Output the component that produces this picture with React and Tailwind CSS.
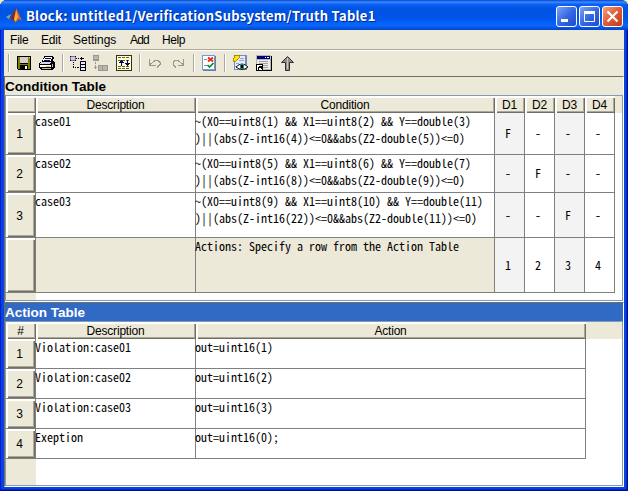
import React from "react";

const raised =
  "border-l-2 border-t-2 border-white shadow-[inset_-1px_-1px_0_#716f64,inset_-2px_-2px_0_#aca899] bg-[#ece9d8]";
const mono =
  "font-['Noto_Sans_CJK_JP',monospace] [font-feature-settings:'hwid'] text-[12px] leading-[17px] whitespace-pre";

const conditionRows = [
  { n: "1", h: "h-[42px]", d: "case01", c: "~(X0==uint8(1) && X1==uint8(2) && Y==double(3)\n)||(abs(Z-int16(4))<=0&&abs(Z2-double(5))<=0)", v: ["F", "-", "-", "-"] },
  { n: "2", h: "h-[38px]", d: "case02", c: "~(X0==uint8(5) && X1==uint8(6) && Y==double(7)\n)||(abs(Z-int16(8))<=0&&abs(Z2-double(9))<=0)", v: ["-", "F", "-", "-"] },
  { n: "3", h: "h-[45px]", d: "case03", c: "~(X0==uint8(9) && X1==uint8(10) && Y==double(11)\n)||(abs(Z-int16(22))<=0&&abs(Z2-double(11))<=0)", v: ["-", "-", "F", "-"] },
  { n: "", h: "h-[55px]", d: "", c: "Actions: Specify a row from the Action Table", v: ["1", "2", "3", "4"], footer: true },
];

const actionRows = [
  ["1", "Violation:case01", "out=uint16(1)"],
  ["2", "Violation:case02", "out=uint16(2)"],
  ["3", "Violation:case03", "out=uint16(3)"],
  ["4", "Exeption", "out=uint16(0);"],
];

function Icon({ x, w, className = "", children }) {
  return (
    <svg className={`shrink-0 ${className}`} width={w} height="20" viewBox={`${x} 54 ${w} 20`} shapeRendering="crispEdges" fill="none">
      {children}
    </svg>
  );
}

function Separator({ className = "" }) {
  return <div className={`h-[18px] w-[2px] shrink-0 border-l border-[#aca899] bg-white ${className}`} />;
}

function HeaderCell({ children }) {
  return (
    <div className={`flex h-[17px] items-center justify-center pr-[3px] text-[12px] leading-[13px] tracking-[-0.2px] ${raised}`}>
      <span>{children}</span>
    </div>
  );
}

function RowHeader({ children }) {
  return (
    <div className="border-r border-[#808080]">
      <div className={`flex h-full items-center justify-center pr-1 pb-px text-[12px] leading-[14px] ${raised}`}>{children}</div>
    </div>
  );
}

function TextCell({ footer, children }) {
  return (
    <div className={`border-r border-[#808080] ${mono} ${footer ? "bg-[#ece9d8]" : ""}`}>
      <div className="-mt-px -ml-px">{children}</div>
    </div>
  );
}

function WindowButton({ red, children }) {
  return (
    <div className={`h-[21px] w-[21px] rounded-[3px] border border-white bg-linear-to-br ${red ? "from-[#f0a080] via-[#e05a35] to-[#c23a14]" : "from-[#7ba2f4] via-[#3668e4] to-[#1c4cc8]"}`}>
      <svg width="19" height="19" viewBox="0 0 19 19">{children}</svg>
    </div>
  );
}

function Toolbar() {
  return (
    <div className="flex h-[25px] items-start pt-[3px] pl-1">
      <Separator />
      <Icon x={17} w={14} className="ml-[7px]">
        <path fill="#000" d="M17 56h14v14h-13l-1-1z" />
        <path fill="#808000" d="M18 57h2v7h8v-7h2v12h-2v-4h-8v4h-2z" />
        <path fill="#d4d0c8" d="M20 57h8v6h-8z" />
        <path fill="#fff" d="M25 66h2v3h-2z" />
        <path fill="#ece9d8" d="M29 57h1v1h-1z" />
      </Icon>
      <Icon x={39} w={17} className="ml-2">
        <path fill="#000" d="M44 56h9v1h1v2h-1v2h1v1h1v6h-1v1h-1v1H41v-1h-1v-1h-1v-5h1v-1h2v-2h1v-2h1z" />
        <path fill="#fff" d="M45 57h7v2h-1v2h-8v-2h1v-1h1z" />
        <path stroke="#000080" d="M45 58.500h6M44 60.500h6" />
        <path fill="#d8d8d8" d="M41 62h10v1h-1v1H40v-1h1z" />
        <path fill="#fff" d="M40 65h11v2H40z" />
        <path fill="#e0d800" d="M46 66h4v1h-4z" />
        <path fill="#b8b8b8" d="M42 68h9v1h-9zM52 64h1v3h-1z" />
      </Icon>
      <Separator className="ml-[6px]" />
      <Icon x={70} w={16} className="ml-[6px]">
        <path fill="#777" d="M70 56h6v5h-6z" />
        <path fill="#000080" d="M70 56h1v1h-1zM75 56h1v1h-1zM70 60h1v1h-1zM75 60h1v1h-1z" />
        <path fill="#c8c8f0" d="M71 57h4v3h-4z" />
        <path fill="#000" d="M76 58h1v1h-1zM78 58h1v1h-1zM80 58h4v1h-4zM81 57h1v3h-1zM80 61h6v10h-6zM73 62h1v1h-1zM73 64h1v1h-1zM73 66h1v2h-1zM75 67h1v1h-1zM77 67h2v1h-2z" />
        <path fill="#e8e8ff" d="M81 62h4v2h-4zM81 65h4v2h-4zM81 68h4v2h-4z" />
        <path fill="#000080" d="M80 61h1v1h-1zM85 61h1v1h-1zM80 64h1v1h-1zM80 67h1v1h-1zM80 70h1v1h-1z" />
      </Icon>
      <Icon x={93} w={16} className="ml-[7px]">
        <path fill="#9c9a90" d="M93 55h6v6h-6zM98 65h10v6H98zM95 62h1v2h-1zM95 65h1v2h-1zM94 67h3v1h-3zM95 68h1v1h-1z" />
        <path fill="#bab7aa" d="M94 56h4v3h-4zM99 66h3v4h-3zM103 66h4v4h-4z" />
      </Icon>
      <Icon x={116} w={16} className="ml-[7px]">
        <path fill="#303030" d="M116 55h16v16h-16z" />
        <path fill="#ffffc8" d="M117 56h14v14h-14z" />
        <path stroke="#606030" strokeDasharray="3 1" d="M118 57.500h12M118 60.500h12M118 66.500h12M118 68.500h12" />
        <path stroke="#000080" d="M121.500 60v6M127.500 60v6M120 61.500h3M119 62.500h5M125 63.500h5M126 64.500h3" />
      </Icon>
      <Separator className="ml-[7px]" />
      <Icon x={149} w={12} className="ml-2">
        <path stroke="#9a998c" d="M149.500 59v6h6M150 64.500l5-4h3l2 2v2l-3 3" />
      </Icon>
      <Icon x={172} w={12} className="ml-[11px]">
        <path stroke="#9a998c" d="M183.500 59v6h-6M183 64.500l-5-4h-3l-2 2v2l3 3" />
      </Icon>
      <Separator className="ml-[9px]" />
      <Icon x={202} w={14} className="ml-[7px]">
        <path fill="#777b94" d="M203 56h13v15h-13z" />
        <path fill="#fff" stroke="#6d9bdd" d="M202.500 55.500h12v14h-12z" />
        <path stroke="#888" d="M204 59.500h3M204 65.500h3" />
        <path shapeRendering="auto" stroke="#ed2d16" strokeWidth="2" d="M208 57.500l5 4M213 57.500l-5 4" />
        <path shapeRendering="auto" stroke="#008b22" strokeWidth="1.700" d="M207.500 65l2 2 4-4" />
      </Icon>
      <Separator className="ml-2" />
      <Icon x={231} w={17} className="ml-[6px]">
        <path fill="#8185a4" d="M234 55h12v15h-12z" />
        <path fill="#e5ebfa" stroke="#6d8fc8" d="M233.500 55.500h11v14h-11z" />
        <path stroke="#91a9cd" d="M239 58.500h4M238 60.500h5M235 63.500h3M234 66.500h2" />
        <path fill="#ffe600" stroke="#8d6900" strokeWidth=".7" d="M233 55h5v3l-3 3-2 1-1-2 1-2z" />
        <path shapeRendering="auto" fill="#fff" stroke="#111" d="M235 67q6-6 12 0q-6 5-12 0" />
        <path fill="#347d82" d="M239 64h4v5h-4z" />
        <path fill="#000" d="M240 65h2v3h-2z" />
      </Icon>
      <Icon x={255} w={16} className="ml-[7px]">
        <path fill="#000" d="M256 56h15v15h-15z" />
        <path fill="#b8b6ae" d="M255 55h15v15h-15z" />
        <path fill="#000080" d="M256 56h13v3h-13z" />
        <path fill="#fff" d="M264 57h1v1h-1zM266 57h2v1h-2z" />
        <path fill="#ecebe6" d="M256 60h13v9h-13z" />
        <path stroke="#a0a0a0" d="M258 61.500h9M258 63.500h9M262 65.500h5M262 67.500h5" />
        <path fill="#fff" stroke="#000" d="M255.500 64.500h6v6h-6z" />
        <path stroke="#000" d="M257.500 70v-2.500H260M258 66.500h2.500V69" />
      </Icon>
      <Icon x={280} w={14} className="ml-[9px]">
        <path shapeRendering="auto" fill="#8e8e8e" stroke="#303030" d="M286.500 56.500l-6 6h4v8h4v-8h4z" />
        <path stroke="#c8c8c8" d="M286.500 58v11" />
      </Icon>
    </div>
  );
}

export default function App() {
  return (
    <div className="h-[491px] w-[628px] bg-[#f4edb8]">
      <div className="flex h-full flex-col overflow-hidden rounded-t-[7px] bg-[#0842e0] font-['Liberation_Sans',sans-serif] text-black shadow-[inset_1px_0_0_#0019cf,inset_-1px_-1px_0_#001090,inset_-2px_-2px_0_#0029c8]">
        <header className="flex h-[30px] shrink-0 items-center bg-[linear-gradient(180deg,#0842d0_0%,#3b8dff_7%,#0a62f4_14%,#0054e3_28%,#0055e8_60%,#0866ff_85%,#0046c8_100%)] pr-[5px] pl-[6px]">
          <svg width="17" height="17" viewBox="0 0 17 17" className="mt-[2px] shrink-0">
            <path fill="#79a9c5" d="M0 9l5-3 3 2-3 4-2-1z" />
            <path fill="#304f7a" d="M5 6l4-4-1 6-3 4-2-1z" />
            <path fill="#8d241b" d="M10 0L8 4 5 12l2-1 2 4 3-4z" />
            <path fill="#e8632b" d="M10 0l2 4 4 9-3-2-4 4 1-6z" />
            <path fill="#ffb33b" d="M10 2l2 7-3 5-1-3z" />
          </svg>
          <h1 className="mt-[2px] ml-[3px] font-['Noto_Sans_CJK_JP',sans-serif] text-[13px] leading-[20px] font-bold tracking-[0.250px] whitespace-pre text-white [text-shadow:1px_1px_0_#00268c]">Block: untitled1/VerificationSubsystem/Truth Table1</h1>
          <div className="mt-[3px] ml-auto flex gap-[2px]">
            <WindowButton><path fill="#fff" d="M4 12h7v3H4z" /></WindowButton>
            <WindowButton><path fill="none" stroke="#fff" d="M4.500 4.500h10v10h-10z" /><path fill="#fff" d="M4 4h11v3H4z" /></WindowButton>
            <WindowButton red><path stroke="#fff" strokeWidth="2.200" d="M4.500 4.500l10 10M14.500 4.500l-10 10" /></WindowButton>
          </div>
        </header>
        <main className="mx-1 mb-1 flex min-h-0 flex-1 flex-col bg-[#ece9d8]">
          <nav className="flex h-[21px] shrink-0 border-b border-white pl-[6px] text-[12px] leading-[21px] shadow-[inset_0_-1px_0_#aca899]">
            <span className="w-[31px] tracking-[-0.200px]">File</span>
            <span className="w-[32px] tracking-[-0.200px]">Edit</span>
            <span className="w-[57px]">Settings</span>
            <span className="w-[32px] tracking-[-0.800px]">Add</span>
            <span className="tracking-[-0.400px]">Help</span>
          </nav>
          <Toolbar />
          <section className="flex h-[226px] shrink-0 flex-col border-t border-l border-[#716f64] border-r border-r-white">
            <h2 className="h-[18px] shrink-0 text-[13.500px] leading-[19px] font-bold">Condition Table</h2>
            <div className="flex min-h-0 flex-1 flex-col border border-[#7f9db9] bg-white">
              <div className="grid h-[17px] shrink-0 grid-cols-[30px_160px_299px_30px_30px_30px_30px_1fr] bg-[#ece9d8]">
                {["", "Description", "Condition", "D1", "D2", "D3", "D4"].map((t, i) => <HeaderCell key={i}>{t}</HeaderCell>)}
              </div>
              {conditionRows.map((r, i) => (
                <div key={i} className={`grid w-[609px] shrink-0 grid-cols-[30px_160px_299px_30px_30px_30px_30px] border-b border-[#808080] ${r.h}`}>
                  <RowHeader>{r.n}</RowHeader>
                  <TextCell footer={r.footer}>{r.d}</TextCell>
                  <TextCell footer={r.footer}>{r.c}</TextCell>
                  {r.v.map((v, k) => (
                    <div key={k} className={`flex items-center justify-center border-r border-[#808080] pr-[3px] pb-[2px] ${mono} ${k % 2 === 0 ? "bg-[#f3f3f3]" : ""}`}>{v}</div>
                  ))}
                </div>
              ))}
              <div className="w-[30px] flex-1 bg-[#ece9d8]" />
            </div>
            <div className="h-px shrink-0 bg-white" />
          </section>
          <section className="flex min-h-0 flex-1 flex-col border-t border-l border-[#716f64] border-r border-b border-r-white border-b-white">
            <h2 className="h-[18px] shrink-0 bg-[#316ac5] text-[13.500px] leading-[19px] font-bold text-white">Action Table</h2>
            <div className="flex min-h-0 flex-1 flex-col border border-[#7f9db9] bg-white">
              <div className="grid h-[17px] shrink-0 grid-cols-[30px_160px_390px_1fr] bg-[#ece9d8]">
                {["#", "Description", "Action"].map((t) => <HeaderCell key={t}>{t}</HeaderCell>)}
              </div>
              {actionRows.map(([n, d, a]) => (
                <div key={n} className="grid h-[30px] w-[580px] shrink-0 grid-cols-[30px_160px_390px] border-b border-[#808080]">
                  <RowHeader>{n}</RowHeader>
                  <TextCell>{d}</TextCell>
                  <TextCell>{a}</TextCell>
                </div>
              ))}
              <div className="w-[30px] flex-1 bg-[#ece9d8]" />
            </div>
          </section>
        </main>
      </div>
    </div>
  );
}
